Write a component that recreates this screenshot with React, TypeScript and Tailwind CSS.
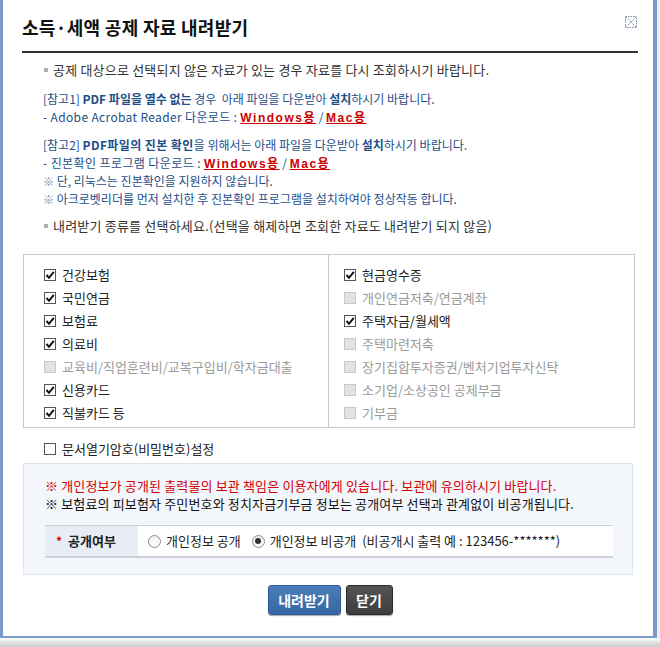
import React from "react";

const F = "font-['Noto_Sans_CJK_KR','Noto_Sans',sans-serif]";

function Check({ checked, disabled }: { checked?: boolean; disabled?: boolean }) {
  if (disabled) {
    return <span className="inline-block w-[12px] h-[12px] shrink-0 border border-[#c9c9c9] bg-[#e3e3e3]" />;
  }
  return (
    <span className="relative inline-block w-[12px] h-[12px] shrink-0 border border-[#555] bg-white">
      {checked && (
        <svg className="absolute left-[0px] top-[0px]" width="10" height="10" viewBox="0 0 10 10">
          <path d="M1.5 5 L4 7.8 L8.8 1.8" fill="none" stroke="#111" strokeWidth="2" />
        </svg>
      )}
    </span>
  );
}

function Radio({ checked }: { checked?: boolean }) {
  return (
    <span className="relative inline-flex items-center justify-center w-[13px] h-[13px] shrink-0 rounded-full border border-[#8a8a8a] bg-gradient-to-b from-[#f0f0f0] to-white">
      {checked && <span className="w-[6px] h-[6px] rounded-full bg-[#333]" />}
    </span>
  );
}

const left: [string, boolean, boolean][] = [
  ["건강보험", true, false],
  ["국민연금", true, false],
  ["보험료", true, false],
  ["의료비", true, false],
  ["교육비/직업훈련비/교복구입비/학자금대출", false, true],
  ["신용카드", true, false],
  ["직불카드 등", true, false],
];
const right: [string, boolean, boolean][] = [
  ["현금영수증", true, false],
  ["개인연금저축/연금계좌", false, true],
  ["주택자금/월세액", true, false],
  ["주택마련저축", false, true],
  ["장기집합투자증권/벤처기업투자신탁", false, true],
  ["소기업/소상공인 공제부금", false, true],
  ["기부금", false, true],
];

function Row({ label, checked, disabled }: { label: string; checked: boolean; disabled: boolean }) {
  return (
    <div className="flex items-center h-[23px] gap-[6px] overflow-hidden">
      <Check checked={checked} disabled={disabled} />
      <span className={`text-[13px] leading-[23px] ${disabled ? "text-[#9a9a9a]" : "text-[#222]"}`}>{label}</span>
    </div>
  );
}

function Link({ children }: { children: React.ReactNode }) {
  return (
    <span className="font-bold text-[#cc0000] underline tracking-[1.5px] leading-[18px] font-['Liberation_Sans','Noto_Sans_CJK_KR',sans-serif]">
      {children}
    </span>
  );
}

const line = "h-[18px] leading-[18px] whitespace-nowrap";

export default function App() {
  return (
    <div className={`relative w-[660px] h-[647px] overflow-hidden bg-[#e8eaee] ${F}`}>
      <div className="flex h-[638px]">
        <div className="w-[657px] h-[638px] border-l-[3px] border-r-[4px] border-b-2 border-[#7b9bc6] bg-white pl-[19px] pr-[15px]">
          {/* header */}
          <div className="relative pt-[13px]">
            <div className="h-[28px] text-[18px] leading-[28px] font-bold text-[#111] tracking-[0.3px]">소득·세액 공제 자료 내려받기</div>
            <svg className="absolute right-[1px] top-[16px]" width="12" height="12" viewBox="0 0 12 12">
              <rect x="0.5" y="0.5" width="11" height="11" fill="none" stroke="#7d8ea8" strokeDasharray="1.5 1" />
              <path d="M1 1 L11 11 M11 1 L1 11" stroke="#7d8ea8" strokeDasharray="1.5 1" />
            </svg>
            <div className="mt-[10px] h-[2px] bg-[#333]" />
          </div>

          {/* notice */}
          <div className="mt-[8px] pl-[22px] flex items-center h-[18px] text-[13px] leading-[18px] tracking-[0.2px] text-[#333] whitespace-nowrap">
            <span className="w-[4px] h-[4px] bg-[#b0b0b0] mr-[5px]" />
            <span>공제 대상으로 선택되지 않은 자료가 있는 경우 자료를 다시 조회하시기 바랍니다.</span>
          </div>

          <div className="mt-[11px] pl-[21px] text-[12px] leading-[18px] text-[#1d4e89]">
            <div className={line}>
              [참고1] <b>PDF 파일을 열수 없는</b> 경우&nbsp; 아래 파일을 다운받아 <b>설치</b>하시기 바랍니다.
            </div>
            <div className={line}>
              <span className="tracking-[0.35px]">- Adobe Acrobat Reader 다운로드 : </span>
              <Link>Windows용</Link> / <Link>Mac용</Link>
            </div>
          </div>

          <div className="mt-[10px] pl-[21px] text-[12px] leading-[18px] text-[#1d4e89]">
            <div className={line}>
              [참고2] <b className="tracking-[0.4px]">PDF파일의 진본 확인</b>을 위해서는 아래 파일을 다운받아 <b>설치</b>하시기 바랍니다.
            </div>
            <div className={line}>
              <span className="tracking-[0.4px]">- 진본확인 프로그램 다운로드 : </span>
              <Link>Windows용</Link> / <Link>Mac용</Link>
            </div>
            <div className={line}>
              <span className="text-[#7a8aa6] text-[11px]">※</span> 단, 리눅스는 진본확인을 지원하지 않습니다.
            </div>
            <div className={line}>
              <span className="text-[#7a8aa6] text-[11px]">※</span> 아크로벳리더를 먼저 설치한 후 진본확인 프로그램을 설치하여야 정상작동 합니다.
            </div>
          </div>

          <div className="mt-[9px] pl-[22px] flex items-center h-[18px] text-[13px] leading-[18px] tracking-[0.2px] text-[#333] whitespace-nowrap">
            <span className="w-[4px] h-[4px] bg-[#b0b0b0] mr-[5px]" />
            <span>내려받기 종류를 선택하세요.(선택을 해제하면 조회한 자료도 내려받기 되지 않음)</span>
          </div>

          {/* checkbox table */}
          <div className="mt-[19px] ml-[1px] w-[612px] h-[174px] border border-[#c8c8c8] flex">
            <div className="w-[305px] border-r border-[#c8c8c8] pl-[20px] pt-[8px]">
              {left.map(([l, c, d]) => (
                <Row key={l} label={l} checked={c} disabled={d} />
              ))}
            </div>
            <div className="flex-1 pl-[15px] pt-[8px]">
              {right.map(([l, c, d]) => (
                <Row key={l} label={l} checked={c} disabled={d} />
              ))}
            </div>
          </div>

          <div className="mt-[9px] pl-[22px]">
            <Row label="문서열기암호(비밀번호)설정" checked={false} disabled={false} />
          </div>

          {/* info box */}
          <div className="mt-[3px] ml-[1px] w-[610px] h-[112px] border border-[#dfe5ee] bg-[#f3f6fb] pt-[13px] pl-[21px]">
            <div className="h-[18px] text-[13px] leading-[18px] tracking-[0.15px] text-[#d40000] whitespace-nowrap">
              ※ 개인정보가 공개된 출력물의 보관 책임은 이용자에게 있습니다. 보관에 유의하시기 바랍니다.
            </div>
            <div className="h-[18px] text-[13px] leading-[18px] tracking-[0.15px] text-[#111] whitespace-nowrap">
              ※ 보험료의 피보험자 주민번호와 정치자금기부금 정보는 공개여부 선택과 관계없이 비공개됩니다.
            </div>
            <div className="mt-[12px] w-[568px] h-[33px] flex border-t border-b-2 border-[#cdd2da]">
              <div className="w-[93px] bg-[#e8edf5] flex items-center pl-[11px] text-[13px] font-bold text-[#222]">
                <span className="text-[#c00] text-[12px] mr-[6px]">*</span>공개여부
              </div>
              <div className="flex-1 bg-white flex items-center pl-[10px] text-[13px] text-[#222] whitespace-nowrap">
                <Radio />
                <span className="ml-[5px]">개인정보 공개</span>
                <span className="ml-[11px]" />
                <Radio checked />
                <span className="ml-[5px] whitespace-pre">개인정보 비공개  (비공개시 출력 예 : 123456-*******)</span>
              </div>
            </div>
          </div>

          {/* buttons */}
          <div className="mt-[10px] flex justify-center gap-[5px]">
            <button className="w-[73px] h-[30px] rounded-[3px] border border-[#2f5c95] bg-gradient-to-b from-[#4b7eba] to-[#3767a3] text-white text-[14px] font-bold shadow-[0_1px_1px_rgba(0,0,0,0.35)]">
              내려받기
            </button>
            <button className="w-[47px] h-[30px] rounded-[3px] border border-[#2b2b2b] bg-gradient-to-b from-[#555] to-[#3d3d3d] text-white text-[14px] font-bold shadow-[0_1px_1px_rgba(0,0,0,0.35)]">
              닫기
            </button>
          </div>
        </div>
        <div className="flex-1 bg-[#e9ecf0]" />
      </div>
      <div className="h-[9px] bg-gradient-to-b from-white via-[#e2e2e2] to-[#cccccc]" />
    </div>
  );
}
